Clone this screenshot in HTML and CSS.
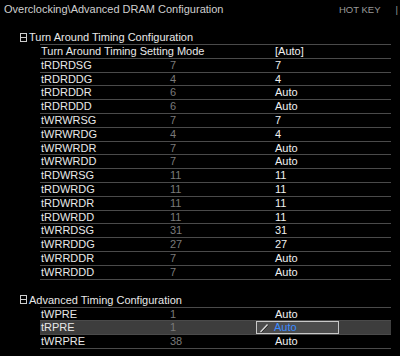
FILE: index.html
```html
<!DOCTYPE html>
<html lang="en">
<head>
  <meta charset="UTF-8">
  <title>Advanced DRAM Configuration</title>
  <link rel="stylesheet" href="styles.css">
</head>
<body>
  <div class="topbar">
    <span class="path">Overclocking\Advanced DRAM Configuration</span>
    <span class="hotkey">HOT KEY<span class="sep">|</span></span>
  </div>

  <div class="group first">
    <div class="group-title">
      <svg class="toggle" width="7" height="9" viewBox="0 0 7 9"><rect x="0.5" y="0.5" width="6" height="8" fill="none" stroke="#ccc"/><line x1="1" y1="4.5" x2="6" y2="4.5" stroke="#ccc"/></svg>
      Turn Around Timing Configuration
    </div>
    <div class="rows">
      <div class="row"><span class="name">Turn Around Timing Setting Mode</span><span class="def"></span><span class="val">[Auto]</span></div>
      <div class="row"><span class="name">tRDRDSG</span><span class="def">7</span><span class="val">7</span></div>
      <div class="row"><span class="name">tRDRDDG</span><span class="def">4</span><span class="val">4</span></div>
      <div class="row"><span class="name">tRDRDDR</span><span class="def">6</span><span class="val">Auto</span></div>
      <div class="row"><span class="name">tRDRDDD</span><span class="def">6</span><span class="val">Auto</span></div>
      <div class="row"><span class="name">tWRWRSG</span><span class="def">7</span><span class="val">7</span></div>
      <div class="row"><span class="name">tWRWRDG</span><span class="def">4</span><span class="val">4</span></div>
      <div class="row"><span class="name">tWRWRDR</span><span class="def">7</span><span class="val">Auto</span></div>
      <div class="row"><span class="name">tWRWRDD</span><span class="def">7</span><span class="val">Auto</span></div>
      <div class="row"><span class="name">tRDWRSG</span><span class="def">11</span><span class="val">11</span></div>
      <div class="row"><span class="name">tRDWRDG</span><span class="def">11</span><span class="val">11</span></div>
      <div class="row"><span class="name">tRDWRDR</span><span class="def">11</span><span class="val">11</span></div>
      <div class="row"><span class="name">tRDWRDD</span><span class="def">11</span><span class="val">11</span></div>
      <div class="row"><span class="name">tWRRDSG</span><span class="def">31</span><span class="val">31</span></div>
      <div class="row"><span class="name">tWRRDDG</span><span class="def">27</span><span class="val">27</span></div>
      <div class="row"><span class="name">tWRRDDR</span><span class="def">7</span><span class="val">Auto</span></div>
      <div class="row"><span class="name">tWRRDDD</span><span class="def">7</span><span class="val">Auto</span></div>
    </div>
  </div>

  <div class="group">
    <div class="group-title">
      <svg class="toggle" width="7" height="9" viewBox="0 0 7 9"><rect x="0.5" y="0.5" width="6" height="8" fill="none" stroke="#ccc"/><line x1="1" y1="4.5" x2="6" y2="4.5" stroke="#ccc"/></svg>
      Advanced Timing Configuration
    </div>
    <div class="rows">
      <div class="row"><span class="name">tWPRE</span><span class="def">1</span><span class="val">Auto</span></div>
      <div class="row selected">
        <span class="name">tRPRE</span><span class="def">1</span>
        <span class="edit">
          <svg class="pencil" width="10" height="10" viewBox="0 0 10 10"><line x1="1.5" y1="9" x2="8.5" y2="1.5" stroke="#ddd" stroke-width="1.2"/><line x1="2.5" y1="9.5" x2="9.5" y2="2.5" stroke="#222" stroke-width="0.8"/></svg>
          <span class="edit-text">Auto</span>
        </span>
      </div>
      <div class="row"><span class="name">tWRPRE</span><span class="def">38</span><span class="val">Auto</span></div>
    </div>
  </div>
</body>
</html>
```

FILE: styles.css
```css
body {
  margin: 0;
  background: #000;
  color: #e8e8e8;
  font-family: "Liberation Sans", Arial, sans-serif;
  font-size: 11px;
  width: 400px;
  height: 356px;
  overflow: hidden;
}
.topbar {
  display: flex;
  justify-content: space-between;
  align-items: center;
  height: 18px;
  padding-left: 4px;
}
.path {
  color: #cfcfcf;
  font-size: 11px;
}
.hotkey {
  color: #9a9a9a;
  font-size: 9.5px;
  white-space: nowrap;
}
.hotkey .sep {
  margin-left: 15px;
  margin-right: 2px;
}
.group {
  padding-left: 20px;
  margin-top: 13px;
}
.group.first {
  margin-top: 12px;
}
.group-title {
  display: flex;
  align-items: center;
  gap: 2px;
  height: 14px;
  line-height: 14px;
  color: #e8e8e8;
}
.toggle {
  flex: none;
}
.rows {
  margin-left: 20px;
  width: 351px;
  border-top: 1px solid #4a4a4a;
}
.row {
  display: grid;
  grid-template-columns: 130px 105px 1fr;
  align-items: center;
  height: 12.8px;
  line-height: 12.8px;
  border-bottom: 1px solid #4a4a4a;
  white-space: nowrap;
}
.name {
  padding-left: 1px;
}
.def {
  color: #7a7a7a;
}
.val {
  color: #f0f0f0;
}
.row.selected {
  background: #3d3d3d;
}
.edit {
  display: flex;
  align-items: center;
  margin-left: -19px;
  width: 81px;
  height: 11px;
  border: 1px solid #c8c8c8;
  background: #4c4c4c;
}
.pencil {
  flex: none;
  margin-left: 2px;
  margin-right: 5px;
}
.edit-text {
  color: #3b8bff;
}
```
